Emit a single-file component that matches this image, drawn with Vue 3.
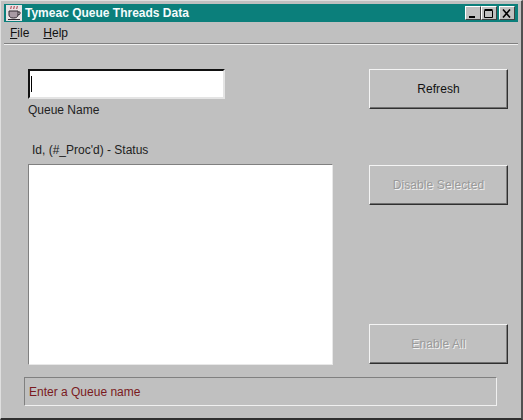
<script setup>
const title = 'Tymeac Queue Threads Data'
const statusMessage = 'Enter a Queue name'
</script>

<template>
  <div class="window">
    <!-- Title bar -->
    <div class="titlebar">
      <svg class="app-icon" width="16" height="16" viewBox="0 0 16 16">
        <rect width="16" height="16" fill="#e8e2e4" />
        <path d="M5 1c1 1-1 2 0 3M8 1c1 1-1 2 0 3M11 1c1 1-1 2 0 3" stroke="#a02030" fill="none" />
        <path d="M3 6h9v4c0 2-2 3-4.500 3S3 12 3 10z" fill="#a89aa4" stroke="#302830" />
        <path d="M12 7h2v2l-2 1" fill="none" stroke="#302830" />
        <path d="M2 14.500h12" stroke="#302830" />
      </svg>
      <span class="title-text">{{ title }}</span>
      <div class="window-buttons">
        <button class="win-btn">
          <svg width="10" height="9" viewBox="0 0 10 9"><path d="M1 7h6v2H1z" fill="#000" /></svg>
        </button>
        <button class="win-btn">
          <svg width="10" height="9" viewBox="0 0 10 9"><path d="M0.500 1.500h8v7h-8z M0.500 0.500h8" fill="none" stroke="#000" /></svg>
        </button>
        <button class="win-btn win-close">
          <svg width="10" height="9" viewBox="0 0 10 9"><path d="M1 0.500l7 8M8 0.500l-7 8" fill="none" stroke="#000" stroke-width="1.600" /></svg>
        </button>
      </div>
    </div>

    <!-- Menu -->
    <div class="menubar">
      <span class="menu-item"><u>F</u>ile</span>
      <span class="menu-item"><u>H</u>elp</span>
    </div>
    <div class="separator"></div>

    <!-- Content -->
    <div class="content">
      <div class="left-col">
        <div class="queue-input"><span class="caret"></span></div>
        <label class="queue-label">Queue Name</label>
        <div class="list-label">Id, (#_Proc'd) - Status</div>
        <div class="list-box"></div>
      </div>
      <div class="right-col">
        <button class="action-btn">Refresh</button>
        <button class="action-btn disabled">Disable Selected</button>
        <button class="action-btn disabled last">Enable All</button>
      </div>
    </div>

    <!-- Status -->
    <div class="status-box">{{ statusMessage }}</div>
  </div>
</template>

<style>
html, body {
  margin: 0;
  background: #c0c0c0;
}
</style>

<style scoped>
.window {
  box-sizing: border-box;
  width: 523px;
  height: 420px;
  padding: 3px 3px 0 3px;
  background: #c0c0c0;
  border-top: 1px solid #dfdfdf;
  border-left: 1px solid #dfdfdf;
  border-bottom: 2px solid #303030;
  border-right: 2px solid #505050;
  font-family: "Liberation Sans", Arial, sans-serif;
  font-size: 12px;
  color: #000;
  display: flex;
  flex-direction: column;
  overflow: hidden;
}

.titlebar {
  height: 18px;
  flex: none;
  background: #0b7f7b;
  display: flex;
  align-items: center;
  padding-left: 2px;
}

.app-icon {
  flex: none;
}

.title-text {
  margin-left: 3px;
  font-weight: 700;
  font-size: 12px;
  color: #f4fbfb;
}

.window-buttons {
  margin-left: auto;
  display: flex;
  padding-right: 3px;
}

.win-btn {
  box-sizing: border-box;
  width: 16px;
  height: 14px;
  padding: 0;
  background: #c0c0c0;
  border: 1px solid;
  border-color: #fff #404040 #404040 #fff;
  display: flex;
  align-items: center;
  justify-content: center;
}

.win-close {
  margin-left: 2px;
}

.menubar {
  height: 21px;
  flex: none;
  display: flex;
  align-items: center;
  gap: 14px;
  padding-left: 6px;
}

.menu-item {
  font-size: 12px;
  color: #111;
}

.separator {
  height: 1px;
  flex: none;
  background: #808080;
  border-bottom: 1px solid #f0f0f0;
}

.content {
  box-sizing: border-box;
  flex: none;
  height: 332px;
  padding: 24px 10px 0 24px;
  display: flex;
  justify-content: space-between;
}

.left-col {
  width: 305px;
  display: flex;
  flex-direction: column;
}

.queue-input {
  box-sizing: border-box;
  width: 197px;
  height: 30px;
  background: #fff;
  border: 2px solid;
  border-color: #111 #e4e4e4 #e4e4e4 #111;
  display: flex;
  align-items: center;
}

.caret {
  width: 1px;
  height: 16px;
  margin-left: 1px;
  background: #000;
}

.queue-label {
  margin-top: 4px;
  line-height: 14px;
  color: #222;
}

.list-label {
  margin-top: 26px;
  padding-left: 4px;
  line-height: 14px;
  color: #222;
}

.list-box {
  box-sizing: border-box;
  margin-top: 7px;
  width: 305px;
  height: 201px;
  background: #fff;
  border: 1px solid;
  border-color: #808080 #e8e8e8 #e8e8e8 #808080;
}

.right-col {
  width: 139px;
  height: 295px;
  display: flex;
  flex-direction: column;
  gap: 56px;
}

.action-btn {
  box-sizing: border-box;
  flex: none;
  width: 139px;
  height: 40px;
  padding: 0;
  background: #c0c0c0;
  border: 1px solid;
  border-color: #f4f4f4 #303030 #303030 #f4f4f4;
  box-shadow: inset 0 -1px 0 #707070, inset -1px 0 0 #808080;
  font-family: inherit;
  font-size: 12px;
  letter-spacing: 0.1px;
  color: #111;
}

.action-btn.disabled {
  color: #9a9a9a;
  text-shadow: 1px 1px 0 #f2f2f2;
}

.action-btn.last {
  margin-top: auto;
}

.status-box {
  box-sizing: border-box;
  flex: none;
  margin-left: 20px;
  width: 473px;
  height: 29px;
  padding-left: 4px;
  border: 1px solid;
  border-color: #808080 #f0f0f0 #f0f0f0 #808080;
  display: flex;
  align-items: center;
  color: #7a1a20;
}
</style>
